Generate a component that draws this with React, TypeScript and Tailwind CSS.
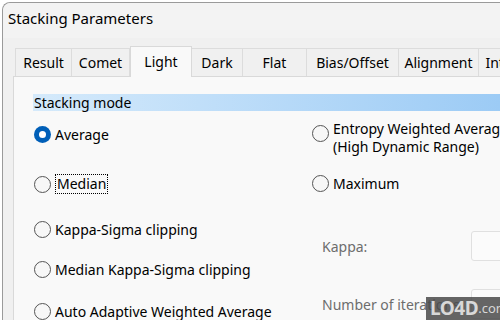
import React from 'react';

const tabs = [
  { label: 'Result', w: 57 },
  { label: 'Comet', w: 58 },
  { label: 'Light', w: 62, active: true },
  { label: 'Dark', w: 51 },
  { label: 'Flat', w: 64 },
  { label: 'Bias/Offset', w: 92 },
  { label: 'Alignment', w: 80 },
  { label: 'Intermediate', w: 100 },
];

function Radio({ checked, className }: { checked?: boolean; className?: string }) {
  if (checked) {
    return (
      <span className={`flex h-[17px] w-[17px] shrink-0 items-center justify-center rounded-full bg-[#005fb8] ${className ?? ''}`}>
        <span className="h-[7px] w-[7px] rounded-full bg-white" />
      </span>
    );
  }
  return <span className={`h-[17px] w-[17px] shrink-0 rounded-full border border-[#555] bg-[#f7f7f7] ${className ?? ''}`} />;
}

function Option({ label, checked, focus, className }: { label: string; checked?: boolean; focus?: boolean; className?: string }) {
  return (
    <div className={`flex h-[20px] items-center gap-[4px] ${className ?? ''}`}>
      <Radio checked={checked} />
      <span className={focus ? 'border border-dotted border-black px-[1px] leading-[18px]' : 'whitespace-nowrap'}>{label}</span>
    </div>
  );
}

export default function App() {
  return (
    <div
      className="relative h-[320px] w-[500px] overflow-hidden bg-white text-[14px] text-black"
      style={{ fontFamily: '"Noto Sans", "Open Sans", sans-serif' }}
    >
      <div className="ml-[2px] mt-[2px] h-[330px] rounded-tl-[8px] border-l border-t border-[#9a9a9a] bg-[#f0f0f0]">
        <div className="flex h-[35px] items-center rounded-tl-[8px] bg-[#f3f3f3] pb-[4px] pl-[5px] text-[15px]">
          Stacking Parameters
        </div>

        <div className="ml-[10px] mt-[8px]">
          <div className="flex h-[30px] items-end pl-[2px]">
            {tabs.map((t) =>
              t.active ? (
                <div
                  key={t.label}
                  className="relative z-10 -mb-px flex h-[31px] shrink-0 items-start justify-center border border-b-0 border-[#d9d9d9] bg-[#f9f9f9] pt-[4px]"
                  style={{ width: t.w }}
                >
                  {t.label}
                </div>
              ) : (
                <div
                  key={t.label}
                  className="flex h-[28px] shrink-0 items-center justify-center border border-l-0 border-b-0 border-[#dcdcdc] bg-[#f0f0f0] first:border-l"
                  style={{ width: t.w }}
                >
                  {t.label}
                </div>
              )
            )}
          </div>

          <div className="h-[260px] border-l border-t border-[#d9d9d9] bg-[#f9f9f9] pl-[19px] pt-[17px]">
            <div className="flex h-[17px] items-center bg-gradient-to-r from-[#d5eafb] to-[#9ccbf5] pl-[1px] leading-none">
              Stacking mode
            </div>

            <div className="flex">
              <div className="flex w-[279px] shrink-0 flex-col pl-[1px] pt-[13px]">
                <Option label="Average" checked />
                <Option label="Median" focus className="mt-[30px]" />
                <Option label="Kappa-Sigma clipping" className="mt-[25px]" />
                <Option label="Median Kappa-Sigma clipping" className="mt-[20px]" />
                <Option label="Auto Adaptive Weighted Average" className="mt-[22px]" />
              </div>

              <div className="flex flex-1 flex-col pt-[9px]">
                <div className="flex items-start gap-[4px]">
                  <Radio className="mt-[5px]" />
                  <div className="whitespace-nowrap leading-[18px]">
                    Entropy Weighted Average
                    <br />
                    (High Dynamic Range)
                  </div>
                </div>
                <Option label="Maximum" className="mt-[17px]" />
                <div className="mt-[38px] flex h-[30px] items-center pl-[10px] text-[#6d6d6d]">
                  <span className="w-[149px]">Kappa:</span>
                  <span className="h-[30px] w-[60px] shrink-0 rounded-[3px] border border-[#e0e0e0] bg-[#fbfbfb]" />
                </div>
                <div className="mt-[28px] flex h-[30px] items-center pl-[10px] text-[#6d6d6d]">
                  <span className="w-[149px] shrink-0 whitespace-nowrap">Number of iterations:</span>
                  <span className="h-[30px] w-[60px] shrink-0 rounded-[3px] border border-[#e0e0e0] bg-[#fbfbfb]" />
                </div>
              </div>
            </div>
          </div>
        </div>
      </div>

      <div className="absolute bottom-0 right-0 flex h-[23px] w-[74px] items-center bg-[#4a4a4a]/85 pl-[4px] text-[#d8d8d8]">
        <span className="text-[19px] font-bold leading-none tracking-tight">LO4D</span>
        <span className="text-[13px] leading-none">.com</span>
      </div>
    </div>
  );
}
